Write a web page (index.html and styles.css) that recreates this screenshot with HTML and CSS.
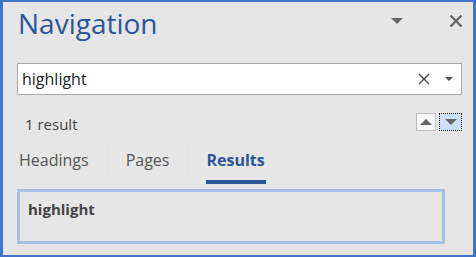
FILE: index.html
```html
<!DOCTYPE html>
<html lang="en">
<head>
    <meta charset="UTF-8">
    <title>Navigation</title>
    <link rel="stylesheet" href="styles.css">
</head>
<body>
    <div class="pane">
        <div class="header">
            <h1>Navigation</h1>
            <span class="menu-arrow"></span>
            <svg class="close" width="14" height="14" viewBox="0 0 14 14">
                <path d="M1.5 1.5 L12.5 12.5 M12.5 1.5 L1.5 12.5" stroke="#666" stroke-width="2.4"/>
            </svg>
        </div>

        <div class="search">
            <span class="query">highlight</span>
            <svg class="clear" width="12" height="12" viewBox="0 0 12 12">
                <path d="M1 1 L11 11 M11 1 L1 11" stroke="#444" stroke-width="1.3"/>
            </svg>
            <span class="search-arrow"></span>
        </div>

        <div class="count-row">
            <span class="count">1 result</span>
            <div class="steppers">
                <button class="step"><span class="up"></span></button>
                <button class="step active"><span class="down"></span></button>
            </div>
        </div>

        <div class="tabs">
            <span class="tab">Headings</span>
            <span class="tab">Pages</span>
            <span class="tab current">Results</span>
        </div>

        <div class="results">
            <span class="hit">highlight</span>
        </div>
    </div>
</body>
</html>
```

FILE: styles.css
```css
html, body {
    margin: 0;
    padding: 0;
}

body {
    font-family: "Open Sans", "Noto Sans", sans-serif;
    color: #444;
}

.pane {
    width: 476px;
    height: 257px;
    box-sizing: border-box;
    background: #e6e6e6;
    border: 2px solid #4472c4;
    border-left-width: 3px;
    border-right-width: 3px;
    padding: 0 11px 0 14px;
}

.header {
    display: flex;
    align-items: center;
    height: 51px;
}

h1 {
    margin: 0;
    flex: 1;
    font-weight: 400;
    font-size: 28px;
    color: #2b579a;
    padding-left: 1px;
    margin-top: -9px;
}

.menu-arrow {
    width: 0;
    height: 0;
    border-left: 6px solid transparent;
    border-right: 6px solid transparent;
    border-top: 6px solid #666;
    margin-right: 46px;
    margin-top: -14px;
}

.close {
    margin-top: -14px;
    margin-right: -1px;
}

.search {
    display: flex;
    align-items: center;
    height: 32px;
    box-sizing: border-box;
    margin-top: 10px;
    background: #fff;
    border: 1px solid #ababab;
    padding: 0 8px 0 4px;
}

.query {
    flex: 1;
    font-size: 16px;
    color: #222;
}

.clear {
    margin-right: 15px;
}

.search-arrow {
    width: 0;
    height: 0;
    border-left: 4px solid transparent;
    border-right: 4px solid transparent;
    border-top: 4px solid #555;
}

.count-row {
    display: flex;
    align-items: center;
    justify-content: space-between;
    height: 48px;
    margin-top: 5px;
}

.count {
    font-size: 15px;
    padding-left: 8px;
    color: #444;
}

.steppers {
    display: flex;
    gap: 3px;
    margin-top: -4px;
}

.step {
    width: 20px;
    height: 18px;
    padding: 0;
    border: 1px solid #bdbdbd;
    background: #f7f7f7;
    display: flex;
    align-items: center;
    justify-content: center;
}

.step.active {
    width: 23px;
    border: 1px dotted #222;
    background: #cde0f7;
}

.up {
    width: 0;
    height: 0;
    border-left: 6px solid transparent;
    border-right: 6px solid transparent;
    border-bottom: 6px solid #666;
}

.down {
    width: 0;
    height: 0;
    border-left: 6px solid transparent;
    border-right: 6px solid transparent;
    border-top: 6px solid #666;
}

.tabs {
    display: flex;
    align-items: flex-start;
    height: 36px;
    padding-left: 2px;
}

.tab {
    font-size: 16px;
    line-height: 22px;
    color: #555;
    padding-top: 1px;
    margin-right: 18px;
    padding-right: 18px;
    border-right: 1px solid #e0e0e0;
    height: 24px;
}

.tab.current {
    border-right: none;
    font-weight: 700;
    color: #2b579a;
    border-bottom: 4px solid #2b579a;
    height: 31px;
    padding-left: 0;
    padding-right: 1px;
}

.results {
    width: 428px;
    height: 55px;
    box-sizing: border-box;
    border: 3px solid #a8c3ea;
    margin-top: 5px;
    padding: 6px 8px;
}

.hit {
    font-size: 15px;
    font-weight: 700;
    color: #444;
}
```
